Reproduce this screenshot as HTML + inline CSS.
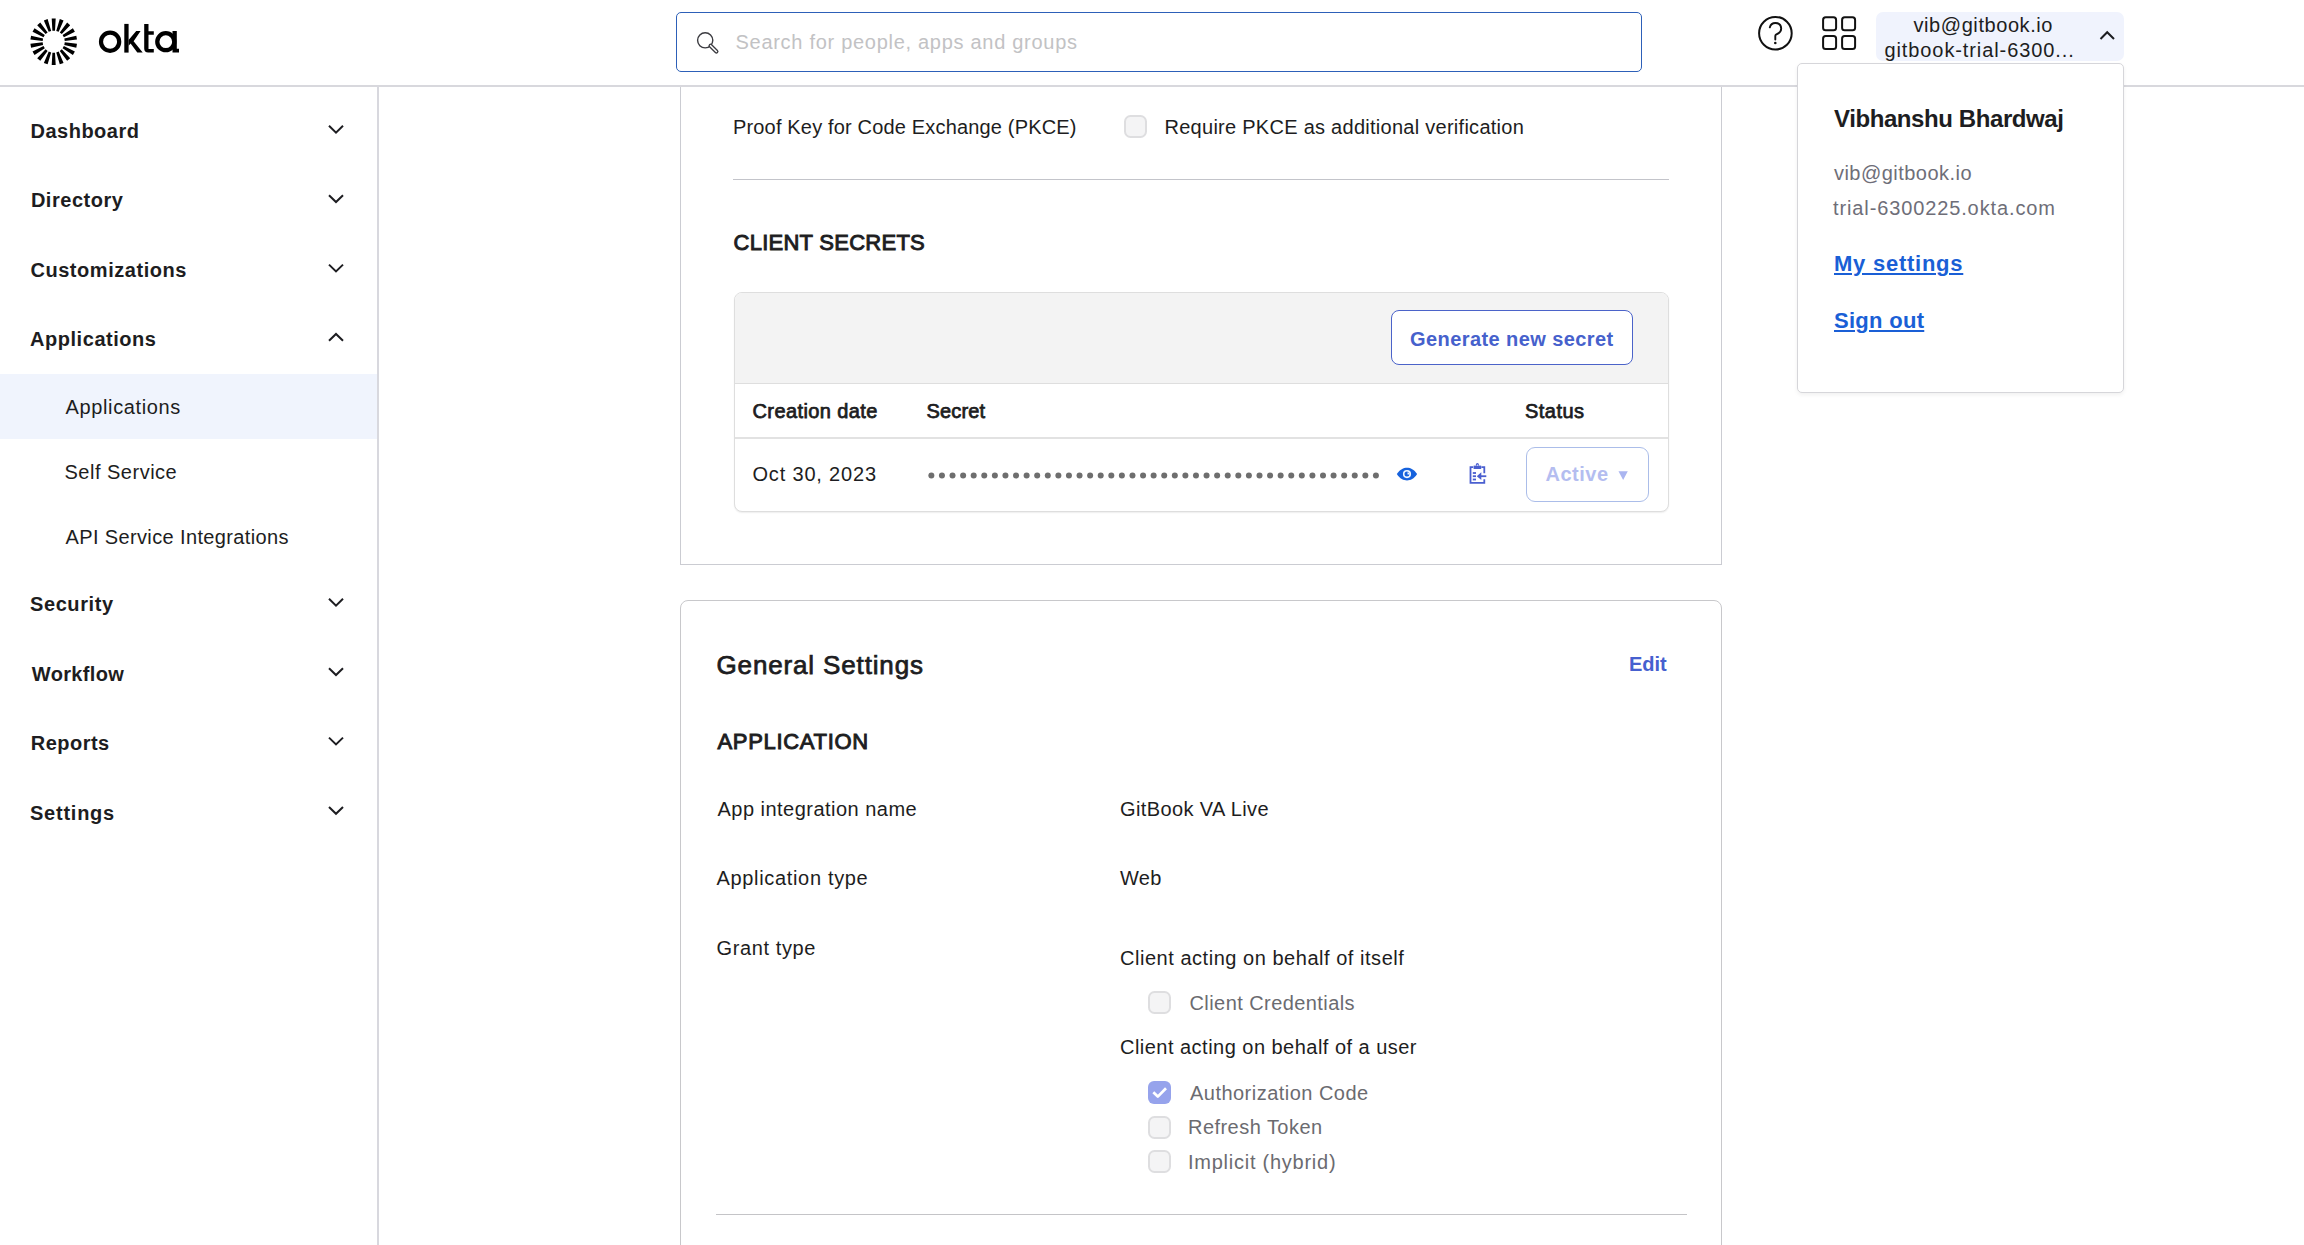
<!DOCTYPE html>
<html>
<head>
<meta charset="utf-8">
<style>
*{box-sizing:border-box;margin:0;padding:0}
html,body{width:2304px;height:1245px;overflow:hidden;background:#fff;font-family:"Liberation Sans",sans-serif;color:#1d1d21}
.a{position:absolute}
.t{position:absolute;white-space:nowrap;line-height:1;font-size:20px}
.b{font-weight:700}
.s{font-weight:400;-webkit-text-stroke:0.75px currentColor}
svg{position:absolute;overflow:visible}
</style>
</head>
<body>

<!-- HEADER -->
<div class="a" style="left:0;top:85px;width:2304px;height:2px;background:#d8d8dd"></div>
<svg style="left:0;top:0" width="200" height="86">
  <path d="M55.00 30.70L55.70 18.40L51.70 18.40L52.40 30.70ZM58.68 31.81L63.55 20.49L59.79 19.12L56.24 30.92ZM61.77 34.11L70.21 25.14L67.14 22.57L59.77 32.44ZM63.88 37.33L74.88 31.78L72.88 28.32L62.58 35.07ZM64.76 41.07L76.99 39.62L76.30 35.68L64.31 38.51ZM64.31 44.89L76.30 47.72L76.99 43.78L64.76 42.33ZM62.58 48.33L72.88 55.08L74.88 51.62L63.88 46.07ZM59.77 50.96L67.14 60.83L70.21 58.26L61.77 49.29ZM56.24 52.48L59.79 64.28L63.55 62.91L58.68 51.59ZM52.40 52.70L51.70 65.00L55.70 65.00L55.00 52.70ZM48.72 51.59L43.85 62.91L47.61 64.28L51.16 52.48ZM45.63 49.29L37.19 58.26L40.26 60.83L47.63 50.96ZM43.52 46.07L32.52 51.62L34.52 55.08L44.82 48.33ZM42.64 42.33L30.41 43.78L31.10 47.72L43.09 44.89ZM43.09 38.51L31.10 35.68L30.41 39.62L42.64 41.07ZM44.82 35.07L34.52 28.32L32.52 31.78L43.52 37.33ZM47.63 32.44L40.26 22.57L37.19 25.14L45.63 34.11ZM51.16 30.92L47.61 19.12L43.85 20.49L48.72 31.81Z" fill="#000"/>
  <circle cx="110.1" cy="41.7" r="9.1" stroke="#000" stroke-width="4.2" fill="none"/>
  <rect x="124.3" y="23.9" width="4.3" height="28.7" fill="#000"/>
  <polygon points="128.6,40 136.2,31.1 140.6,31.1 133.6,41.3 142.7,52.6 137.3,52.6 130.6,43.6 128.6,45.8" fill="#000"/>
  <path d="M144.2 23.9H148.5V31.3H153.8V34.8H148.5V48.9H153.8V52.6H148.2Q144.2 52.6 144.2 48.6Z" fill="#000"/>
  <circle cx="165.8" cy="41.7" r="8.5" stroke="#000" stroke-width="4.3" fill="none"/>
  <path d="M172.5 31.1H176.8V48.8H179V52.6H172.5Z" fill="#000"/>
</svg>

<!-- search -->
<div class="a" style="left:676px;top:11.5px;width:966px;height:60.5px;border:1.8px solid #2d60b8;border-radius:5px;background:#fff"></div>
<svg style="left:0;top:0" width="1" height="1">
  <circle cx="705.2" cy="40.3" r="7.6" stroke="#3b3b40" stroke-width="1.4" fill="none"/>
  <path d="M710.6 45.7L716.4 51.5" stroke="#3b3b40" stroke-width="4.2" stroke-linecap="round"/>
  <path d="M710.6 45.7L716.4 51.5" stroke="#fff" stroke-width="1.6" stroke-linecap="round"/>
</svg>
<div class="t" id="search" style="left:735.5px;top:32.3px;color:#c2c2c4;letter-spacing:0.712px">Search for people, apps and groups</div>

<!-- help / grid -->
<svg style="left:0;top:0" width="1" height="1">
  <circle cx="1775.4" cy="33.2" r="16.3" stroke="#111" stroke-width="2" fill="none"/>
  <path d="M1769.8 27.4Q1771 23 1775.3 23Q1781 23 1781.2 28.5Q1781.2 32.6 1776 34.6Q1775.3 35 1775.3 36V39.5" stroke="#111" stroke-width="1.9" fill="none" stroke-linecap="round"/>
  <circle cx="1775.3" cy="43" r="1.3" fill="#111"/>
  <rect x="1823.1" y="17.3" width="13" height="13" rx="2.6" stroke="#111" stroke-width="2" fill="none"/>
  <rect x="1842.1" y="17.3" width="13" height="13" rx="2.6" stroke="#111" stroke-width="2" fill="none"/>
  <rect x="1823.1" y="36.1" width="13" height="13" rx="2.6" stroke="#111" stroke-width="2" fill="none"/>
  <rect x="1842.1" y="36.1" width="13" height="13" rx="2.6" stroke="#111" stroke-width="2" fill="none"/>
</svg>

<!-- user button -->
<div class="a" style="left:1876px;top:12px;width:248px;height:49px;border-radius:7px;background:#f0f3fd"></div>
<div class="t" id="u1" style="left:1913.5px;top:14.9px;letter-spacing:0.576px">vib@gitbook.io</div>
<div class="t" id="u2" style="left:1884.5px;top:39.9px;letter-spacing:0.900px">gitbook-trial-6300...</div>
<svg style="left:0;top:0" width="1" height="1">
  <path d="M2100.5 39L2107.2 32.2L2114 39" stroke="#1d1d21" stroke-width="2" fill="none"/>
</svg>

<!-- SIDEBAR -->
<div class="a" style="left:377px;top:86px;width:2px;height:1159px;background:#d8d8de"></div>
<div class="a" style="left:0;top:374px;width:377px;height:65px;background:#f0f4fd"></div>

<div class="t b" id="n1" style="left:30.5px;top:120.5px;letter-spacing:0.500px">Dashboard</div>
<div class="t b" id="n2" style="left:30.9px;top:189.9px;letter-spacing:0.536px">Directory</div>
<div class="t b" id="n3" style="left:30.4px;top:259.5px;letter-spacing:0.551px">Customizations</div>
<div class="t b" id="n4" style="left:30.0px;top:329.0px;letter-spacing:0.544px">Applications</div>
<div class="t" id="n5" style="left:65.5px;top:396.5px;letter-spacing:0.636px">Applications</div>
<div class="t" id="n6" style="left:64.5px;top:461.5px;letter-spacing:0.499px">Self Service</div>
<div class="t" id="n7" style="left:65.5px;top:526.6px;letter-spacing:0.369px">API Service Integrations</div>
<div class="t b" id="n8" style="left:30.0px;top:594.0px;letter-spacing:0.585px">Security</div>
<div class="t b" id="n9" style="left:31.8px;top:663.5px;letter-spacing:0.343px">Workflow</div>
<div class="t b" id="n10" style="left:30.8px;top:733.0px;letter-spacing:0.467px">Reports</div>
<div class="t b" id="n11" style="left:30.0px;top:802.7px;letter-spacing:0.758px">Settings</div>

<svg style="left:0;top:0" width="1" height="1">
  <g stroke="#1d1d21" stroke-width="2" fill="none">
    <path d="M329 125.8L336 132.6L343 125.8"/>
    <path d="M329 195.2L336 202L343 195.2"/>
    <path d="M329 264.6L336 271.4L343 264.6"/>
    <path d="M329 340.8L336 334L343 340.8"/>
    <path d="M329 598.8L336 605.6L343 598.8"/>
    <path d="M329 668.2L336 675L343 668.2"/>
    <path d="M329 737.6L336 744.4L343 737.6"/>
    <path d="M329 807L336 813.8L343 807"/>
  </g>
</svg>

<!-- MAIN CARD 1 -->
<div class="a" style="left:680px;top:87px;width:1042px;height:478px;border:1.3px solid #cbccd2;border-top:none"></div>
<div class="t" id="pk1" style="left:733.0px;top:117.0px;letter-spacing:0.167px">Proof Key for Code Exchange (PKCE)</div>
<div class="a" style="left:1124px;top:115px;width:23px;height:23px;border:2.2px solid #dedee0;background:#f4f4f5;border-radius:6.5px"></div>
<div class="t" id="pk2" style="left:1164.5px;top:117.0px;letter-spacing:0.270px">Require PKCE as additional verification</div>
<div class="a" style="left:733px;top:179px;width:936px;height:1.3px;background:#c3c4ca"></div>
<div class="t s" id="cs" style="-webkit-text-stroke:0.95px currentColor;left:733.5px;top:231.8px;font-size:22px;letter-spacing:0.262px">CLIENT SECRETS</div>

<div class="a" style="left:734px;top:292px;width:935px;height:220px;border:1.5px solid #dedede;border-radius:8px;overflow:hidden;background:#fff;box-shadow:0 1px 1.5px rgba(0,0,0,0.07)">
  <div class="a" style="left:0;top:0;width:100%;height:91px;background:#f3f3f3;border-bottom:1.5px solid #dedede"></div>
  <div class="a" style="left:0;top:144px;width:100%;height:1.5px;background:#e2e2e2"></div>
</div>
<div class="a" style="left:1391px;top:310px;width:242px;height:55px;border:1.6px solid #4b63c9;border-radius:8px;background:#fff"></div>
<div class="t b" id="gen" style="left:1410.0px;top:328.6px;color:#4661cc;letter-spacing:0.416px">Generate new secret</div>
<div class="t s" id="th1" style="left:752.5px;top:400.5px;letter-spacing:0.401px">Creation date</div>
<div class="t s" id="th2" style="left:926.5px;top:400.5px;letter-spacing:0.160px">Secret</div>
<div class="t s" id="th3" style="left:1525.0px;top:400.8px;letter-spacing:0.480px">Status</div>
<div class="t" id="date" style="left:752.5px;top:463.8px;letter-spacing:0.818px">Oct 30, 2023</div>
<svg style="left:0;top:0" width="1" height="1" fill="#6e6e6e"><circle cx="931.35" cy="475.6" r="3"/><circle cx="941.94" cy="475.6" r="3"/><circle cx="952.52" cy="475.6" r="3"/><circle cx="963.11" cy="475.6" r="3"/><circle cx="973.69" cy="475.6" r="3"/><circle cx="984.27" cy="475.6" r="3"/><circle cx="994.86" cy="475.6" r="3"/><circle cx="1005.45" cy="475.6" r="3"/><circle cx="1016.03" cy="475.6" r="3"/><circle cx="1026.62" cy="475.6" r="3"/><circle cx="1037.20" cy="475.6" r="3"/><circle cx="1047.79" cy="475.6" r="3"/><circle cx="1058.37" cy="475.6" r="3"/><circle cx="1068.95" cy="475.6" r="3"/><circle cx="1079.54" cy="475.6" r="3"/><circle cx="1090.12" cy="475.6" r="3"/><circle cx="1100.71" cy="475.6" r="3"/><circle cx="1111.30" cy="475.6" r="3"/><circle cx="1121.88" cy="475.6" r="3"/><circle cx="1132.47" cy="475.6" r="3"/><circle cx="1143.05" cy="475.6" r="3"/><circle cx="1153.63" cy="475.6" r="3"/><circle cx="1164.22" cy="475.6" r="3"/><circle cx="1174.81" cy="475.6" r="3"/><circle cx="1185.39" cy="475.6" r="3"/><circle cx="1195.97" cy="475.6" r="3"/><circle cx="1206.56" cy="475.6" r="3"/><circle cx="1217.14" cy="475.6" r="3"/><circle cx="1227.73" cy="475.6" r="3"/><circle cx="1238.32" cy="475.6" r="3"/><circle cx="1248.90" cy="475.6" r="3"/><circle cx="1259.49" cy="475.6" r="3"/><circle cx="1270.07" cy="475.6" r="3"/><circle cx="1280.65" cy="475.6" r="3"/><circle cx="1291.24" cy="475.6" r="3"/><circle cx="1301.83" cy="475.6" r="3"/><circle cx="1312.41" cy="475.6" r="3"/><circle cx="1323.00" cy="475.6" r="3"/><circle cx="1333.58" cy="475.6" r="3"/><circle cx="1344.16" cy="475.6" r="3"/><circle cx="1354.75" cy="475.6" r="3"/><circle cx="1365.34" cy="475.6" r="3"/><circle cx="1375.92" cy="475.6" r="3"/></svg>
<svg style="left:0;top:0" width="1" height="1">
  <path d="M1396.8 474.1C1400 469.3 1403.5 467.7 1407 467.7C1410.5 467.7 1414 469.3 1417.1 474.1C1414 478.9 1410.5 480.5 1407 480.5C1403.5 480.5 1400 478.9 1396.8 474.1Z" fill="#1662dd"/>
  <circle cx="1407" cy="474.1" r="3.3" stroke="#eef6ff" stroke-width="1.6" fill="none"/>
  <path d="M1407.5 474.6V472.3A2.3 2.3 0 0 1 1409.8 474.6Z" fill="#eef6ff"/>
  <g stroke="#4a5fd0" stroke-width="1.8" fill="none">
    <path d="M1473.2 467.2H1470.5V482.9H1484.3V479.2"/>
    <path d="M1484.3 473.3V467.2H1481.4"/>
  </g>
  <path d="M1473.6 465.6H1481.2V469H1473.6Z" fill="#4a5fd0"/>
  <circle cx="1477.4" cy="464.6" r="1.5" fill="#4a5fd0"/>
  <circle cx="1477.4" cy="465.2" r="0.6" fill="#fff"/>
  <g fill="#4a5fd0">
    <rect x="1472.8" y="472.1" width="3.2" height="1.8"/>
    <rect x="1472.8" y="475.3" width="3.2" height="1.8"/>
    <rect x="1472.8" y="478.6" width="3.2" height="1.8"/>
    <rect x="1480" y="475.3" width="6.3" height="1.8"/>
    <path d="M1476.8 476.2L1481.3 472.3V480.1Z"/>
  </g>
</svg>
<div class="a" style="left:1526px;top:447px;width:123px;height:55px;border:1.6px solid #abbde9;border-radius:9px;background:#fff"></div>
<div class="t b" id="act" style="left:1545.5px;top:464.0px;color:#b4bdf0;letter-spacing:0.500px">Active</div>
<svg style="left:0;top:0" width="1" height="1">
  <path d="M1618.5 471.3H1627.8L1623.15 480Z" fill="#aab5f0"/>
</svg>

<!-- MAIN CARD 2 -->
<div class="a" style="left:680px;top:600px;width:1042px;height:700px;border:1.3px solid #c8c8cb;border-radius:8px"></div>
<div class="t s" id="gs" style="left:716.5px;top:651.7px;font-size:26px;letter-spacing:0.853px">General Settings</div>
<div class="t b" id="edit" style="left:1629.0px;top:653.8px;color:#4660cf;letter-spacing:-0.001px">Edit</div>
<div class="t s" id="app" style="-webkit-text-stroke:0.95px currentColor;left:717.5px;top:731.2px;font-size:22px;letter-spacing:0.680px">APPLICATION</div>
<div class="t" id="ain" style="left:717.5px;top:798.6px;letter-spacing:0.475px">App integration name</div>
<div class="t" id="gbv" style="left:1120.0px;top:798.7px;letter-spacing:0.393px">GitBook VA Live</div>
<div class="t" id="at" style="left:716.5px;top:868.1px;letter-spacing:0.668px">Application type</div>
<div class="t" id="web" style="left:1120.0px;top:868.1px;letter-spacing:0.250px">Web</div>
<div class="t" id="gt" style="left:716.5px;top:937.7px;letter-spacing:0.612px">Grant type</div>
<div class="t" id="ca1" style="left:1120.0px;top:947.7px;letter-spacing:0.531px">Client acting on behalf of itself</div>
<div class="a" style="left:1148px;top:991px;width:23px;height:23px;border:2.2px solid #dedee0;background:#f4f4f5;border-radius:6.5px"></div>
<div class="t" id="cc" style="left:1189.5px;top:992.9px;color:#6b6b70;letter-spacing:0.426px">Client Credentials</div>
<div class="t" id="ca2" style="left:1120.0px;top:1036.9px;letter-spacing:0.476px">Client acting on behalf of a user</div>
<div class="a" style="left:1148px;top:1081px;width:23px;height:23px;background:#96a3ec;border-radius:6px"></div>
<svg style="left:0;top:0" width="1" height="1">
  <path d="M1153.3 1092.3L1157.8 1096.6L1166 1088.2" stroke="#fff" stroke-width="2.7" fill="none" stroke-linejoin="round"/>
</svg>
<div class="t" id="ac" style="left:1190.0px;top:1082.8px;color:#6b6b70;letter-spacing:0.471px">Authorization Code</div>
<div class="a" style="left:1148px;top:1116px;width:23px;height:23px;border:2.2px solid #dedee0;background:#f4f4f5;border-radius:6.5px"></div>
<div class="t" id="rt" style="left:1188.0px;top:1117.3px;color:#6b6b70;letter-spacing:0.458px">Refresh Token</div>
<div class="a" style="left:1148px;top:1150px;width:23px;height:23px;border:2.2px solid #dedee0;background:#f4f4f5;border-radius:6.5px"></div>
<div class="t" id="ih" style="left:1188.0px;top:1152.0px;color:#6b6b70;letter-spacing:0.751px">Implicit (hybrid)</div>
<div class="a" style="left:716px;top:1214px;width:971px;height:1.2px;background:#c4c4c7"></div>

<!-- DROPDOWN -->
<div class="a" style="left:1797px;top:63px;width:327px;height:330px;border:1.5px solid #d6d6da;border-radius:5px;background:#fff;box-shadow:0 2px 4px rgba(0,0,0,0.06)"></div>
<div class="t b" id="vb" style="left:1834.0px;top:107.2px;font-size:24px;letter-spacing:-0.410px">Vibhanshu Bhardwaj</div>
<div class="t" id="e1" style="left:1834.0px;top:162.6px;color:#6e6e78;letter-spacing:0.463px">vib@gitbook.io</div>
<div class="t" id="e2" style="left:1833.0px;top:197.9px;color:#6e6e78;letter-spacing:0.880px">trial-6300225.okta.com</div>
<div class="t b" id="ms" style="left:1834.0px;top:252.7px;font-size:22px;color:#1a5fd6;text-decoration:underline;text-decoration-thickness:2px;text-underline-offset:2px;letter-spacing:0.750px">My settings</div>
<div class="t b" id="so" style="left:1834.0px;top:310.1px;font-size:22px;color:#1a5fd6;text-decoration:underline;text-decoration-thickness:2px;text-underline-offset:2px;letter-spacing:0.285px">Sign out</div>

</body>
</html>
